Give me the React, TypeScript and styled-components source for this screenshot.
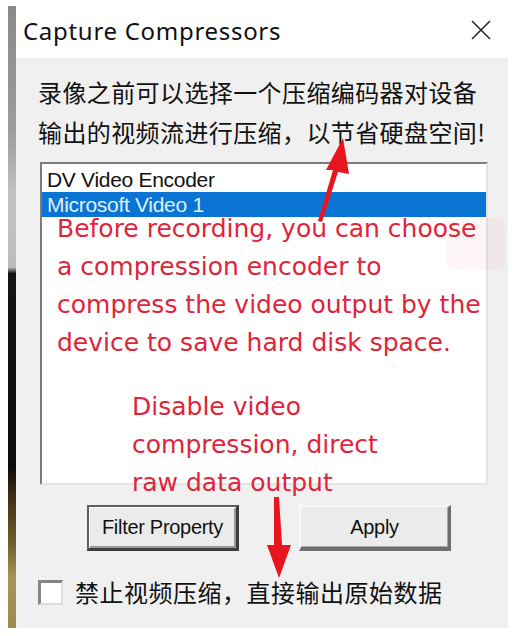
import React from 'react';
import styled, { createGlobalStyle } from 'styled-components';

const GlobalStyle = createGlobalStyle`
  html, body {
    margin: 0;
    padding: 0;
    background: #ffffff;
  }
`;

const Page = styled.div`
  width: 516px;
  height: 636px;
  box-sizing: border-box;
  padding: 6px 8px 8px 8px;
  display: flex;
  flex-direction: row;
`;

const DesktopEdge = styled.div`
  width: 8px;
  flex: none;
  background: linear-gradient(
    to bottom,
    #8a8a8a 0%,
    #9c9c9c 20%,
    #c2c2c2 30%,
    #bdbdbd 42%,
    #141414 43%,
    #0c0c0c 74%,
    #4a3418 80%,
    #6e5a2c 86%,
    #a89454 92%,
    #9c8a4a 100%
  );
`;

const Window = styled.div`
  position: relative;
  width: 492px;
  height: 622px;
  display: flex;
  flex-direction: column;
  background: #f0f0f0;
  border-top-left-radius: 8px;
  overflow: hidden;
`;

const TitleBar = styled.div`
  height: 52px;
  flex: none;
  display: flex;
  align-items: center;
  justify-content: space-between;
  padding: 0 17px 0 7px;
  background: #ffffff;
`;

const Title = styled.span`
  font-family: "Noto Sans", "Open Sans", sans-serif;
  font-size: 24px;
  color: #111111;
  letter-spacing: 0.7px;
  margin-top: -4px;
`;

const CloseIcon = styled.svg`
  width: 20px;
  height: 20px;
  margin-top: -4px;
`;

const Body = styled.div`
  flex: 1;
  display: flex;
  flex-direction: column;
  padding: 14px 20px 0 22px;
`;

const Intro = styled.p`
  margin: 0;
  font-family: "Noto Sans CJK SC", "Noto Sans", sans-serif;
  font-size: 24px;
  line-height: 40px;
  letter-spacing: 0.4px;
  color: #111111;
  white-space: nowrap;
`;

const ListBox = styled.div`
  margin: 10px 0 0 2px;
  width: 448px;
  height: 323px;
  box-sizing: border-box;
  background: #ffffff;
  border-top: 2px solid #7c7c7c;
  border-left: 2px solid #7c7c7c;
  border-right: 2px solid #e4e4e4;
  border-bottom: 2px solid #e4e4e4;
  padding-top: 3px;
  display: flex;
  flex-direction: column;
`;

const ListRow = styled.div<{ $selected?: boolean }>`
  height: 25px;
  display: flex;
  align-items: center;
  padding-left: 5px;
  font-family: "Liberation Sans", Arial, sans-serif;
  font-size: 21px;
  letter-spacing: -0.3px;
  color: ${p => (p.$selected ? '#dff0ff' : '#111111')};
  background: ${p => (p.$selected ? '#0a74d4' : 'transparent')};
`;

const ButtonRow = styled.div`
  margin-top: 20px;
  padding-left: 49px;
  display: flex;
  gap: 60px;
`;

const Button = styled.button<{ $default?: boolean }>`
  width: 152px;
  height: 46px;
  box-sizing: border-box;
  padding: 0;
  font-family: "Liberation Sans", Arial, sans-serif;
  font-size: 20px;
  letter-spacing: -0.3px;
  color: #111111;
  background: #ebebeb;
  border-style: solid;
  border-width: ${p => (p.$default ? '2px 3px 3px 2px' : '2px 3px 4px 2px')};
  border-color: ${p =>
    p.$default
      ? '#5e5e5e #3e3e3e #3e3e3e #5e5e5e'
      : '#f8f8f8 #6e6e6e #6e6e6e #f8f8f8'};
  box-shadow: ${p => (p.$default ? 'inset 1px 1px 0 #ffffff, inset -2px -2px 0 #9a9a9a' : 'inset -1px -1px 0 #a8a8a8')};
`;

const CheckRow = styled.label`
  margin-top: 27px;
  display: flex;
  align-items: center;
  gap: 12px;
`;

const CheckBox = styled.span`
  width: 25px;
  height: 25px;
  box-sizing: border-box;
  background: #ffffff;
  border-top: 3px solid #858585;
  border-left: 3px solid #858585;
  border-right: 2px solid #dedede;
  border-bottom: 2px solid #dedede;
`;

const CheckLabel = styled.span`
  font-family: "Noto Sans CJK SC", "Noto Sans", sans-serif;
  font-size: 24px;
  line-height: 28px;
  letter-spacing: 0.5px;
  color: #111111;
  white-space: nowrap;
`;

const Annotation = styled.div<{ $top: number; $left: number }>`
  position: absolute;
  top: ${p => p.$top}px;
  left: ${p => p.$left}px;
  font-family: "DejaVu Sans", Verdana, sans-serif;
  font-size: 25px;
  line-height: 38px;
  color: #e0243a;
  white-space: pre;
  pointer-events: none;
`;

const Watermark = styled.div`
  position: absolute;
  top: 212px;
  left: 431px;
  width: 58px;
  height: 52px;
  border-radius: 8px;
  background: rgba(240, 120, 130, 0.07);
  pointer-events: none;
`;

const ArrowLayer = styled.svg`
  position: absolute;
  top: 0;
  left: 0;
  width: 492px;
  height: 622px;
  pointer-events: none;
`;

// arrow points are in window coordinates (page minus 16,6)
const upArrow = [
  [327, 132], [333, 168], [322, 166], [306, 216], [302, 215], [317, 164], [310, 164],
];
const downArrow = [
  [258, 491], [263, 491], [266, 539], [275, 539], [263, 572], [251, 539], [258, 539],
];

const toPoints = (pts: number[][]) => pts.map(p => p.join(',')).join(' ');

export default function App() {
  return (
    <>
      <GlobalStyle />
      <Page>
        <DesktopEdge />
        <Window>
          <TitleBar>
            <Title>Capture Compressors</Title>
            <CloseIcon viewBox="0 0 20 20">
              <path d="M1 1 L19 19 M19 1 L1 19" stroke="#2a2a2a" strokeWidth="1.6" fill="none" />
            </CloseIcon>
          </TitleBar>
          <Body>
            <Intro>
              录像之前可以选择一个压缩编码器对设备
              <br />
              输出的视频流进行压缩，以节省硬盘空间!
            </Intro>
            <ListBox>
              <ListRow>DV Video Encoder</ListRow>
              <ListRow $selected>Microsoft Video 1</ListRow>
            </ListBox>
            <ButtonRow>
              <Button $default>Filter Property</Button>
              <Button>Apply</Button>
            </ButtonRow>
            <CheckRow>
              <CheckBox />
              <CheckLabel>禁止视频压缩，直接输出原始数据</CheckLabel>
            </CheckRow>
          </Body>
          <Watermark />
          <Annotation $top={204} $left={41}>
            {'Before recording, you can choose\na compression encoder to\ncompress the video output by the\ndevice to save hard disk space.'}
          </Annotation>
          <Annotation $top={382} $left={116}>
            {'Disable video\ncompression, direct\nraw data output'}
          </Annotation>
          <ArrowLayer viewBox="0 0 492 622">
            <polygon points={toPoints(upArrow)} fill="#e8141e" />
            <polygon points={toPoints(downArrow)} fill="#e8141e" />
          </ArrowLayer>
        </Window>
      </Page>
    </>
  );
}
